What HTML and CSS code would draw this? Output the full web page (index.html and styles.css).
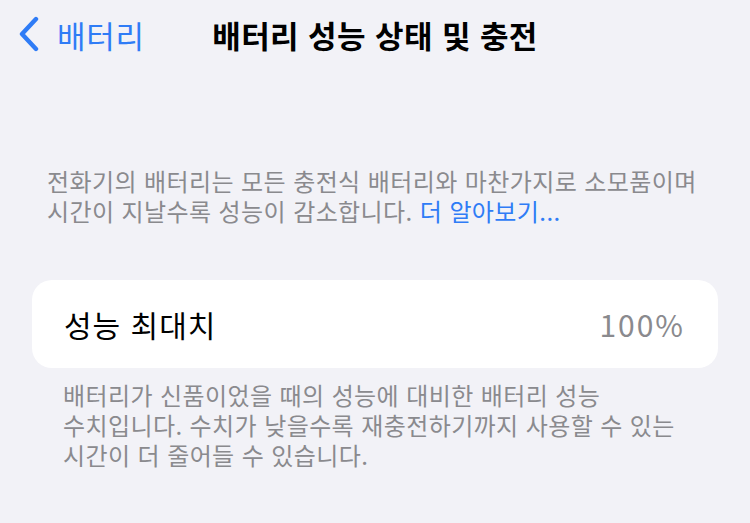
FILE: index.html
```html
<!DOCTYPE html>
<html lang="ko">
  <head>
    <meta charset="utf-8">
    <title>배터리 성능 상태 및 충전</title>
    <link rel="stylesheet" href="styles.css">
  </head>
  <body>
    <header class="nav">
      <a class="back" href="#">
        <svg class="chevron" width="22" height="36" viewBox="0 0 22 36">
          <path d="M18 3 L4 18 L18 33" fill="none" stroke="#2f7cf6" stroke-width="4.4" stroke-linecap="round" stroke-linejoin="round"/>
        </svg>
        <span>배터리</span>
      </a>
      <h1 class="title">배터리 성능 상태 및 충전</h1>
    </header>

    <p class="note intro">전화기의 배터리는 모든 충전식 배터리와 마찬가지로 소모품이며<br>시간이 지날수록 성능이 감소합니다. <a class="link" href="#">더 알아보기...</a></p>

    <section class="card">
      <span class="label">성능 최대치</span>
      <span class="value">100%</span>
    </section>

    <p class="note footer">배터리가 신품이었을 때의 성능에 대비한 배터리 성능<br>수치입니다. 수치가 낮을수록 재충전하기까지 사용할 수 있는<br>시간이 더 줄어들 수 있습니다.</p>
  </body>
</html>
```

FILE: styles.css
```css
body {
  margin: 0;
  background-color: #f2f2f7;
  font-family: "Noto Sans CJK KR", "Noto Sans", sans-serif;
  color: #000;
}
.nav {
  position: relative;
  height: 68px;
  display: flex;
  align-items: center;
}
.back {
  display: flex;
  align-items: center;
  gap: 17px;
  padding-left: 18px;
  color: #2f7cf6;
  text-decoration: none;
  font-size: 31px;
  letter-spacing: 0.7px;
}
.title {
  position: absolute;
  left: 0;
  right: 0;
  text-align: center;
  margin: 0;
  font-size: 31px;
  font-weight: bold;
  letter-spacing: 0.4px;
  pointer-events: none;
}
.note {
  margin: 0;
  font-size: 24px;
  line-height: 30px;
  letter-spacing: 0.4px;
  color: #8a8a8e;
}
.intro {
  margin-top: 98px;
  padding-left: 47px;
}
.link {
  color: #2f7cf6;
  text-decoration: none;
}
.card {
  margin: 54px 32px 0 32px;
  height: 88px;
  background-color: #fff;
  border-radius: 20px;
  display: flex;
  align-items: center;
  justify-content: space-between;
  padding: 0 33px 0 32px;
}
.label {
  font-size: 30px;
  letter-spacing: 1px;
}
.value {
  font-size: 30px;
  letter-spacing: 2px;
  color: #8a8a8e;
}
.footer {
  margin-top: 12px;
  padding-left: 63px;
}
```
